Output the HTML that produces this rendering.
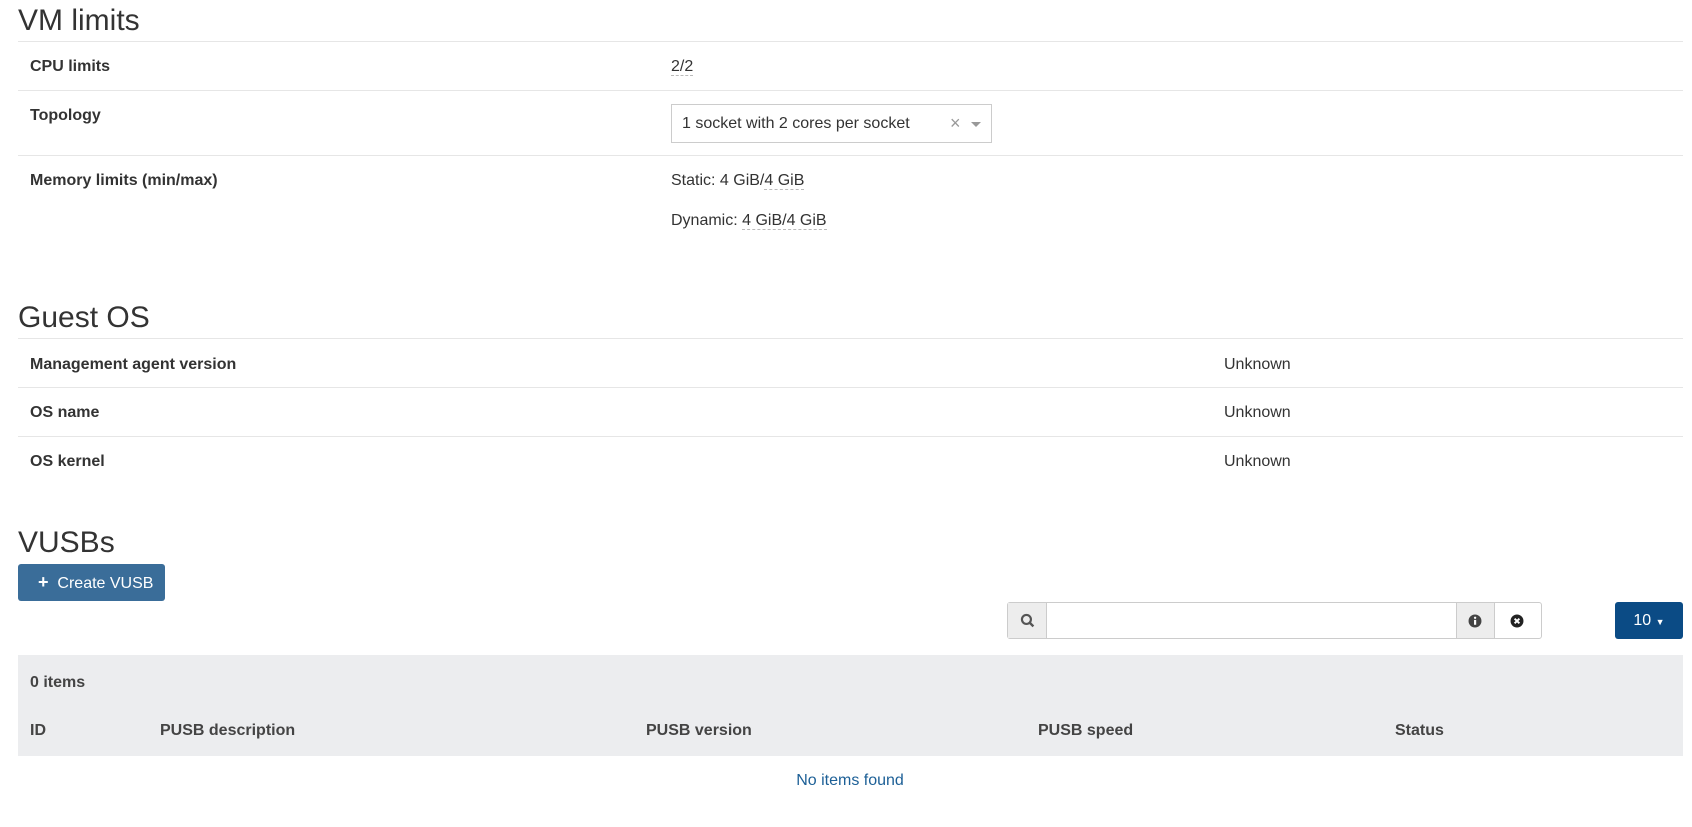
<!DOCTYPE html>
<html><head><style>
body{margin:0;width:1692px;height:827px;background:#fff;font-family:"Liberation Sans",sans-serif;font-size:16px;color:#333;position:relative;overflow:hidden}
.a{position:absolute;white-space:nowrap;line-height:18px}
h2{position:absolute;margin:0;font-weight:400;font-size:30px;line-height:34px;color:#333;left:18px}
.hr{position:absolute;left:18px;width:1665px;height:1px;background:#e6e6e6}
b{font-weight:700}
.u{border-bottom:1px dashed #bbb}
</style></head><body>
<h2 style="top:4px">VM limits</h2>
<div class="hr" style="top:41px"></div>
<div class="a" style="left:30px;top:58px"><b>CPU limits</b></div>
<div class="a" style="left:671px;top:58px"><span class="u">2/2</span></div>
<div class="hr" style="top:90px"></div>
<div class="a" style="left:30px;top:107px"><b>Topology</b></div>
<div class="a" style="left:671px;top:104px;width:319px;height:37px;border:1px solid #ccc;"></div>
<div class="a" style="left:682px;top:115px">1 socket with 2 cores per socket</div>
<div class="a" style="left:950px;top:114px;color:#999;font-size:18px">×</div>
<div class="a" style="left:971px;top:122px;width:0;height:0;border-left:5px solid transparent;border-right:5px solid transparent;border-top:5px solid #999"></div>
<div class="hr" style="top:155px"></div>
<div class="a" style="left:30px;top:172px"><b>Memory limits (min/max)</b></div>
<div class="a" style="left:671px;top:172px">Static: 4 GiB/<span class="u">4 GiB</span></div>
<div class="a" style="left:671px;top:212px">Dynamic: <span class="u">4 GiB/4 GiB</span></div>
<h2 style="top:301px">Guest OS</h2>
<div class="hr" style="top:338px"></div>
<div class="a" style="left:30px;top:356px"><b>Management agent version</b></div>
<div class="a" style="left:1224px;top:356px">Unknown</div>
<div class="hr" style="top:387px"></div>
<div class="a" style="left:30px;top:404px"><b>OS name</b></div>
<div class="a" style="left:1224px;top:404px">Unknown</div>
<div class="hr" style="top:436px"></div>
<div class="a" style="left:30px;top:453px"><b>OS kernel</b></div>
<div class="a" style="left:1224px;top:453px">Unknown</div>
<h2 style="top:526px">VUSBs</h2>
<div class="a" style="left:18px;top:564px;width:147px;height:37px;background:#3a6d99;border-radius:3px;color:#fff;line-height:37px;"><span style="margin-left:20px;font-weight:700;font-size:18px">+</span>&nbsp; Create VUSB</div>
<div class="a" style="left:1007px;top:602px;width:533px;height:35px;border:1px solid #ccc;border-radius:3px"></div>
<div class="a" style="left:1008px;top:603px;width:38px;height:35px;background:#ededed;border-right:1px solid #ccc"></div>
<svg class="a" style="left:1020px;top:613px" width="15" height="15" viewBox="0 0 14 14"><circle cx="6" cy="6" r="4.2" fill="none" stroke="#555" stroke-width="2"/><path d="M9 9l3.5 3.5" stroke="#555" stroke-width="2.2"/></svg>
<div class="a" style="left:1456px;top:603px;width:37px;height:35px;background:#ededed;border-left:1px solid #ccc;border-right:1px solid #ccc"></div>
<svg class="a" style="left:1468px;top:614px" width="14" height="14" viewBox="0 0 13 13"><circle cx="6.5" cy="6.5" r="6" fill="#444"/><rect x="5.6" y="5.5" width="2" height="4.5" fill="#fff"/><circle cx="6.6" cy="3.5" r="1.1" fill="#fff"/></svg>
<div class="a" style="left:1510px;top:614px"><svg width="14" height="14" viewBox="0 0 13 13"><circle cx="6.5" cy="6.5" r="6" fill="#222"/><path d="M4.3 4.3l4.4 4.4M8.7 4.3l-4.4 4.4" stroke="#fff" stroke-width="1.8"/></svg></div>
<div class="a" style="left:1615px;top:602px;width:68px;height:37px;background:#0b4b85;border-radius:3px;color:#fff;line-height:37px;text-align:center">10 <span style="font-size:9px">▼</span></div>
<div class="a" style="left:18px;top:655px;width:1665px;height:101px;background:#ecedef"></div>
<div class="a" style="left:30px;top:674px;color:#444"><b>0 items</b></div>
<div class="a" style="left:30px;top:722px;color:#444"><b>ID</b></div>
<div class="a" style="left:160px;top:722px;color:#444"><b>PUSB description</b></div>
<div class="a" style="left:646px;top:722px;color:#444"><b>PUSB version</b></div>
<div class="a" style="left:1038px;top:722px;color:#444"><b>PUSB speed</b></div>
<div class="a" style="left:1395px;top:722px;color:#444"><b>Status</b></div>
<div class="a" style="left:790px;width:120px;text-align:center;top:772px;color:#1c5f96">No items found</div>
</body></html>
